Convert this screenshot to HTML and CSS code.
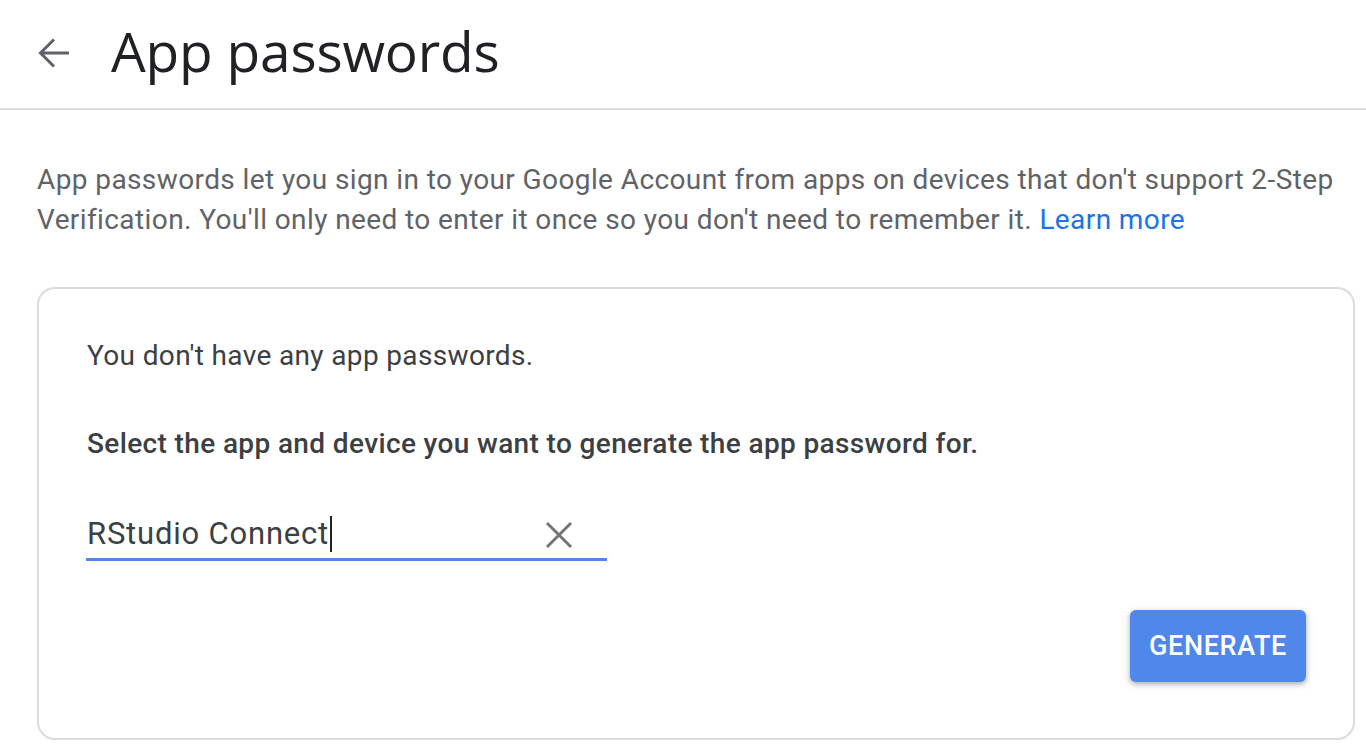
FILE: index.html
```html
<!DOCTYPE html>
<html lang="en">
<head>
<meta charset="utf-8">
<title>App passwords</title>
<link rel="stylesheet" href="styles.css">
</head>
<body>
<header class="topbar">
  <svg class="back" width="32" height="32" viewBox="0 0 32 32" aria-hidden="true">
    <path d="M31 16H3M16 2.5 2.5 16 16 29.5" fill="none" stroke="#5f6368" stroke-width="3"/>
  </svg>
  <h1 class="title">App passwords</h1>
</header>
<main class="content">
  <p class="intro">App passwords let you sign in to your Google Account from apps on devices that don't support 2-Step Verification. You'll only need to enter it once so you don't need to remember it. <a class="link" href="#">Learn more</a></p>
  <section class="card">
    <p class="empty">You don't have any app passwords.</p>
    <p class="prompt">Select the app and device you want to generate the app password for.</p>
    <div class="field">
      <span class="value">RStudio Connect<span class="caret"></span></span>
      <svg class="clear" width="28" height="28" viewBox="0 0 28 28" aria-hidden="true">
        <path d="M2 2 26 26M26 2 2 26" fill="none" stroke="#757575" stroke-width="3"/>
      </svg>
    </div>
    <div class="actions">
      <button class="generate" type="button">GENERATE</button>
    </div>
  </section>
</main>
</body>
</html>
```
FILE: styles.css
```css
* { box-sizing: border-box; }
html, body { margin: 0; padding: 0; background: #fff; }
body { font-family: Roboto, "Liberation Sans", sans-serif; width: 1366px; height: 756px; overflow: hidden; }

.topbar {
  height: 110px;
  display: flex;
  align-items: center;
  padding-left: 38px;
  border-bottom: 2px solid #dadce0;
}
.back { display: block; margin-top: -2px; }
.title {
  margin: 0 0 0 41px;
  font-family: "Open Sans", sans-serif;
  font-weight: 400;
  font-size: 55px;
  color: #202124;
  letter-spacing: -0.2px;
  line-height: 1;
  margin-top: -7px;
}

.content { padding: 50px 11px 0 37px; }
.intro {
  margin: 0;
  font-size: 28px;
  line-height: 40px;
  color: #5f6368;
  letter-spacing: 0.4px;
}
.link { color: #1a73e8; text-decoration: none; }

.card {
  margin-top: 47px;
  height: 453px;
  border: 2px solid #dadce0;
  border-radius: 18px;
  padding: 47px 47px 0 48px;
}
.empty, .prompt {
  margin: 0;
  font-size: 28px;
  line-height: 40px;
  color: #3c4043;
  letter-spacing: 0.35px;
}
.prompt { margin-top: 48px; font-weight: 500; letter-spacing: 0.37px; }

.field {
  margin-top: 47px;
  width: 521px;
  margin-left: -1px;
  height: 50px;
  display: flex;
  align-items: center;
  justify-content: space-between;
  padding: 0 34px 2px 1px;
  border-bottom: 3px solid #4f87eb;
}
.value {
  font-size: 31px;
  color: #3c4043;
  letter-spacing: 0.8px;
  display: flex;
  align-items: center;
}
.caret {
  display: inline-block;
  width: 2px;
  height: 36px;
  background: #202124;
  margin-left: 1px;
}
.clear { display: block; margin-top: 2px; }

.actions { display: flex; justify-content: flex-end; margin-top: 49px; }
.generate {
  width: 176px;
  height: 72px;
  border: none;
  border-radius: 6px;
  background: #4f87eb;
  color: #fff;
  font-family: Roboto, sans-serif;
  font-weight: 500;
  font-size: 27px;
  letter-spacing: 0.6px;
  box-shadow: 0 2px 4px rgba(60,64,67,0.3), 0 2px 6px 2px rgba(60,64,67,0.12);
  padding: 0;
}
```
